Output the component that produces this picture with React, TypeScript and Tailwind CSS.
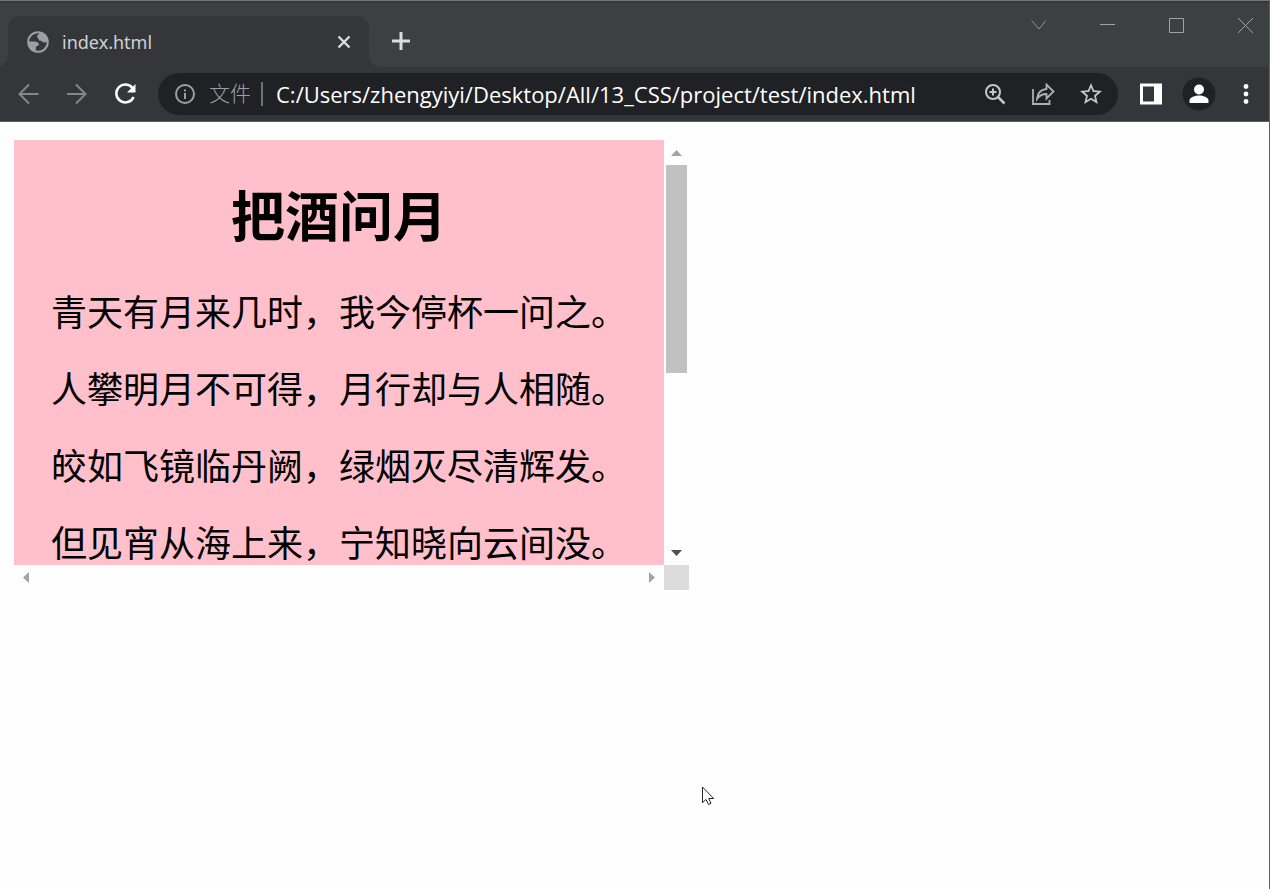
import type { ReactNode } from 'react';

const VERSES = [
  '青天有月来几时，我今停杯一问之。',
  '人攀明月不可得，月行却与人相随。',
  '皎如飞镜临丹阙，绿烟灭尽清辉发。',
  '但见宵从海上来，宁知晓向云间没。',
];

interface IconButtonProps {
  label: string;
  className?: string;
  children: ReactNode;
}

function IconButton({ label, className = 'w-12 h-10', children }: IconButtonProps) {
  return (
    <button type="button" aria-label={label} className={`flex items-center justify-center shrink-0 ${className}`}>
      {children}
    </button>
  );
}

function TabFoot({ side }: { side: 'left' | 'right' }) {
  return (
    <svg
      className={side === 'left' ? 'absolute bottom-0 -left-2' : 'absolute bottom-0 -right-3'}
      width={side === 'left' ? 8 : 12}
      height="12"
      viewBox={side === 'left' ? '4 0 8 12' : '0 0 12 12'}
      fill="#35363a"
    >
      <path d={side === 'left' ? 'M12 0v12H0A12 12 0 0 0 12 0z' : 'M0 0v12h12A12 12 0 0 1 0 0z'} />
    </svg>
  );
}

function TabStrip() {
  return (
    <div className="flex h-16 items-start bg-[#3c4043]">
      {/* 标签页 */}
      <div className="relative mt-[13px] ml-2 flex h-[51px] w-[361px] items-center rounded-t-xl bg-[#35363a] pl-[19px] pr-3">
        <TabFoot side="left" />
        <svg width="22" height="22" viewBox="0 0 22 22" className="shrink-0">
          <circle cx="11" cy="11" r="9.800" fill="none" stroke="#9aa0a6" strokeWidth="2" />
          <path
            d="M13.500 1.500C12.500 3 10 3.500 10 5.500c0 1.500 1.500 1.200 1.500 2.500 0 1.200 1 1.700 2.200 1.800 1.500.1 1.800 1.700 3.300 1.700 1.300 0 2.500-.5 4-.5C21 6 18 2.500 13.500 1.500z"
            fill="#9aa0a6"
          />
          <path
            d="M1.500 10.500h6c2.200 0 4.500 1.200 4.500 3 0 1.500-2.500 1.200-3 2.500-.4 1.200.3 2.500-.5 4.500C4 19.500 1 15.500 1.500 10.500z"
            fill="#9aa0a6"
          />
        </svg>
        <span className="ml-[13px] flex-1 pt-px font-['Noto_Sans','Noto_Sans_CJK_SC',sans-serif] text-[18px] text-[#cfd1d4]">
          index.html
        </span>
        <IconButton label="关闭标签页" className="size-6 mr-px">
          <svg width="14" height="14" viewBox="0 0 14 14" stroke="#dadce0" strokeWidth="2.400">
            <path d="M1.500 1.500l11 11M12.500 1.500l-11 11" />
          </svg>
        </IconButton>
        <TabFoot side="right" />
      </div>
      <IconButton label="新标签页" className="size-8 mt-[22px] ml-4">
        <svg width="18" height="18" viewBox="0 0 18 18" stroke="#dadce0" strokeWidth="3">
          <path d="M9 0v18M0 9h18" />
        </svg>
      </IconButton>

      {/* 窗口按钮 */}
      <div className="ml-auto flex gap-[21px]">
        <IconButton label="搜索标签页" className="w-12 h-[44px]">
          <svg width="16" height="16" viewBox="0 0 16 16" fill="none" stroke="#929496">
            <path d="M1.500 3.500L9 12l7-8.500" />
          </svg>
        </IconButton>
        <IconButton label="最小化" className="w-12 h-[44px]">
          <svg width="16" height="16" viewBox="0 0 16 16" fill="none" stroke="#a0a2a4">
            <path d="M1 7.500h15" />
          </svg>
        </IconButton>
        <IconButton label="最大化" className="w-12 h-[44px]">
          <svg width="16" height="16" viewBox="0 0 16 16" fill="none" stroke="#a0a2a4">
            <path d="M1.500 1.500h14v14h-14z" />
          </svg>
        </IconButton>
        <IconButton label="关闭" className="w-12 h-[44px]">
          <svg width="16" height="16" viewBox="0 0 16 16" fill="none" stroke="#a0a2a4">
            <path d="M1 1l15 15M16 1L1 16" />
          </svg>
        </IconButton>
      </div>
    </div>
  );
}

function Toolbar() {
  return (
    <div className="flex h-[55px] items-center border-b border-[#5d5e62] bg-[#35363a] pl-[5px]">
      <IconButton label="后退">
        <svg width="22" height="22" viewBox="0 0 22 22" fill="none" stroke="#85868a" strokeWidth="2">
          <path d="M20.500 11H2M11 1.500L1.500 11l9.500 9.500" />
        </svg>
      </IconButton>
      <IconButton label="前进">
        <svg width="22" height="22" viewBox="0 0 22 22" fill="none" stroke="#85868a" strokeWidth="2">
          <path d="M1 11h18M10 1.500l9.500 9.500-9.500 9.500" />
        </svg>
      </IconButton>
      <IconButton label="重新加载">
        <svg width="22" height="22" viewBox="0 0 22 22" fill="none" stroke="#fff" strokeWidth="2.500">
          <path d="M18.700 5.200A9 9 0 1 0 19.600 14" />
          <path d="M21.500 1v8.500H13z" fill="#fff" stroke="none" />
        </svg>
      </IconButton>

      {/* 地址栏 */}
      <div className="mx-[9px] flex h-[42px] min-w-0 flex-1 items-center rounded-full bg-[#202124] pl-[17px] pr-[3px]">
        <svg width="20" height="20" viewBox="0 0 20 20" fill="none" stroke="#9aa0a6" strokeWidth="2" className="shrink-0">
          <circle cx="10" cy="10" r="9" />
          <path d="M10 9v6M10 5.500v2" />
        </svg>
        <label htmlFor="url" className="ml-[14px] shrink-0 text-[21px] font-light text-[#9aa0a6]">文件</label>
        <span className="ml-[10px] h-6 w-0.5 shrink-0 bg-[#6f7276]" />
        <input
          id="url"
          type="text"
          defaultValue="C:/Users/zhengyiyi/Desktop/All/13_CSS/project/test/index.html"
          className="ml-[13px] min-w-0 flex-1 bg-transparent text-[22px] text-white outline-none"
        />
        <IconButton label="缩放">
          <svg width="22" height="22" viewBox="0 0 22 22" fill="none" stroke="#c4c7ca" strokeWidth="2">
            <circle cx="9" cy="9" r="7" />
            <path d="M14 14l6.500 6.500" strokeWidth="2.500" />
            <path d="M9 5.500v7M5.500 9h7" />
          </svg>
        </IconButton>
        <IconButton label="分享">
          <svg width="24" height="22" viewBox="0 0 24 22" fill="none" stroke="#aeb1b4" strokeWidth="1.800">
            <path d="M2 6v15h16.500v-4" />
            <path d="M6 16c.5-6 4-9.500 9.500-10V1.500L22.500 8.500l-7 7V11c-4-.2-7 1.500-9.500 5z" />
          </svg>
        </IconButton>
        <IconButton label="收藏">
          <svg width="22" height="22" viewBox="2 2 20 20" fill="#c4c7ca">
            <path d="M22 9.240l-7.190-.62L12 2 9.190 8.630 2 9.240l5.460 4.730L5.820 21 12 17.270 18.180 21l-1.630-7.030L22 9.240zM12 15.400l-3.760 2.270 1-4.280-3.320-2.880 4.380-.38L12 6.100l1.710 4.040 4.380.38-3.320 2.880 1 4.280L12 15.400z" />
          </svg>
        </IconButton>
      </div>

      <IconButton label="侧边栏">
        <svg width="22" height="22" viewBox="0 0 22 22">
          <path d="M0 0.500h22v21H0z" fill="#fff" />
          <path d="M3 3.500h11v15H3z" fill="#35363a" />
        </svg>
      </IconButton>
      <IconButton label="用户">
        <svg width="34" height="34" viewBox="0 0 34 34">
          <circle cx="17" cy="17" r="16.500" fill="#202124" />
          <circle cx="17" cy="12.500" r="5" fill="#fff" />
          <path d="M7.500 26v-2.500c0-3.500 6-5 9.500-5s9.500 1.500 9.500 5V26z" fill="#fff" />
        </svg>
      </IconButton>
      <IconButton label="更多" className="w-[46px] h-10">
        <svg width="6" height="20" viewBox="0 0 6 20" fill="#fff">
          <circle cx="3" cy="2.500" r="2.400" />
          <circle cx="3" cy="10" r="2.400" />
          <circle cx="3" cy="17.500" r="2.400" />
        </svg>
      </IconButton>
    </div>
  );
}

function PoemBox() {
  return (
    <div className="grid w-[675px] grid-cols-[1fr_25px]">
      <article className="bg-[#ffc0cb] pt-10 text-center text-black">
        <h1 className="text-[54px] font-bold leading-[72px]">把酒问月</h1>
        <div className="mt-10 flex flex-col gap-[35px] text-[36px] leading-[42px]">
          {VERSES.map(verse => (
            <p key={verse} className="whitespace-nowrap">{verse}</p>
          ))}
        </div>
      </article>

      {/* 垂直滚动条 */}
      <div className="flex flex-col items-center">
        <div className="flex h-[25px] items-center">
          <svg width="11" height="6" viewBox="0 0 11 6" fill="#a3a3a3">
            <path d="M5.500 0L11 6H0z" />
          </svg>
        </div>
        <div className="h-[208px] w-[21px] bg-[#c1c1c1]" />
        <div className="mt-auto flex h-[25px] items-center">
          <svg width="11" height="6" viewBox="0 0 11 6" fill="#505050">
            <path d="M0 0h11L5.500 6z" />
          </svg>
        </div>
      </div>

      {/* 水平滚动条 */}
      <div className="flex h-[25px] items-center justify-between px-[9px]">
        <svg width="6" height="11" viewBox="0 0 6 11" fill="#a3a3a3">
          <path d="M6 0v11L0 5.500z" />
        </svg>
        <svg width="6" height="11" viewBox="0 0 6 11" fill="#a3a3a3">
          <path d="M0 0l6 5.500L0 11z" />
        </svg>
      </div>
      <div className="bg-[#dcdcdc]" />
    </div>
  );
}

export default function App() {
  return (
    <div className="relative min-h-screen border-r border-[#5d5e62] bg-[#fefefe] font-['Open_Sans','Noto_Sans_CJK_SC',sans-serif]">
      <header>
        <div className="h-px bg-[#737577]" />
        <div className="h-0.5 bg-[#34383a]" />
        <TabStrip />
        <Toolbar />
      </header>
      <main className="pt-[18px] pl-[14px]">
        <PoemBox />
      </main>

      {/* 鼠标指针 */}
      <svg className="absolute left-[702px] top-[786px]" width="13" height="20" viewBox="0 0 13 20">
        <path d="M.5 1v15.500l3.500-3 2.500 5 2.500-1.200-2.300-4.800h5z" fill="#fff" stroke="#22223a" />
      </svg>
    </div>
  );
}
